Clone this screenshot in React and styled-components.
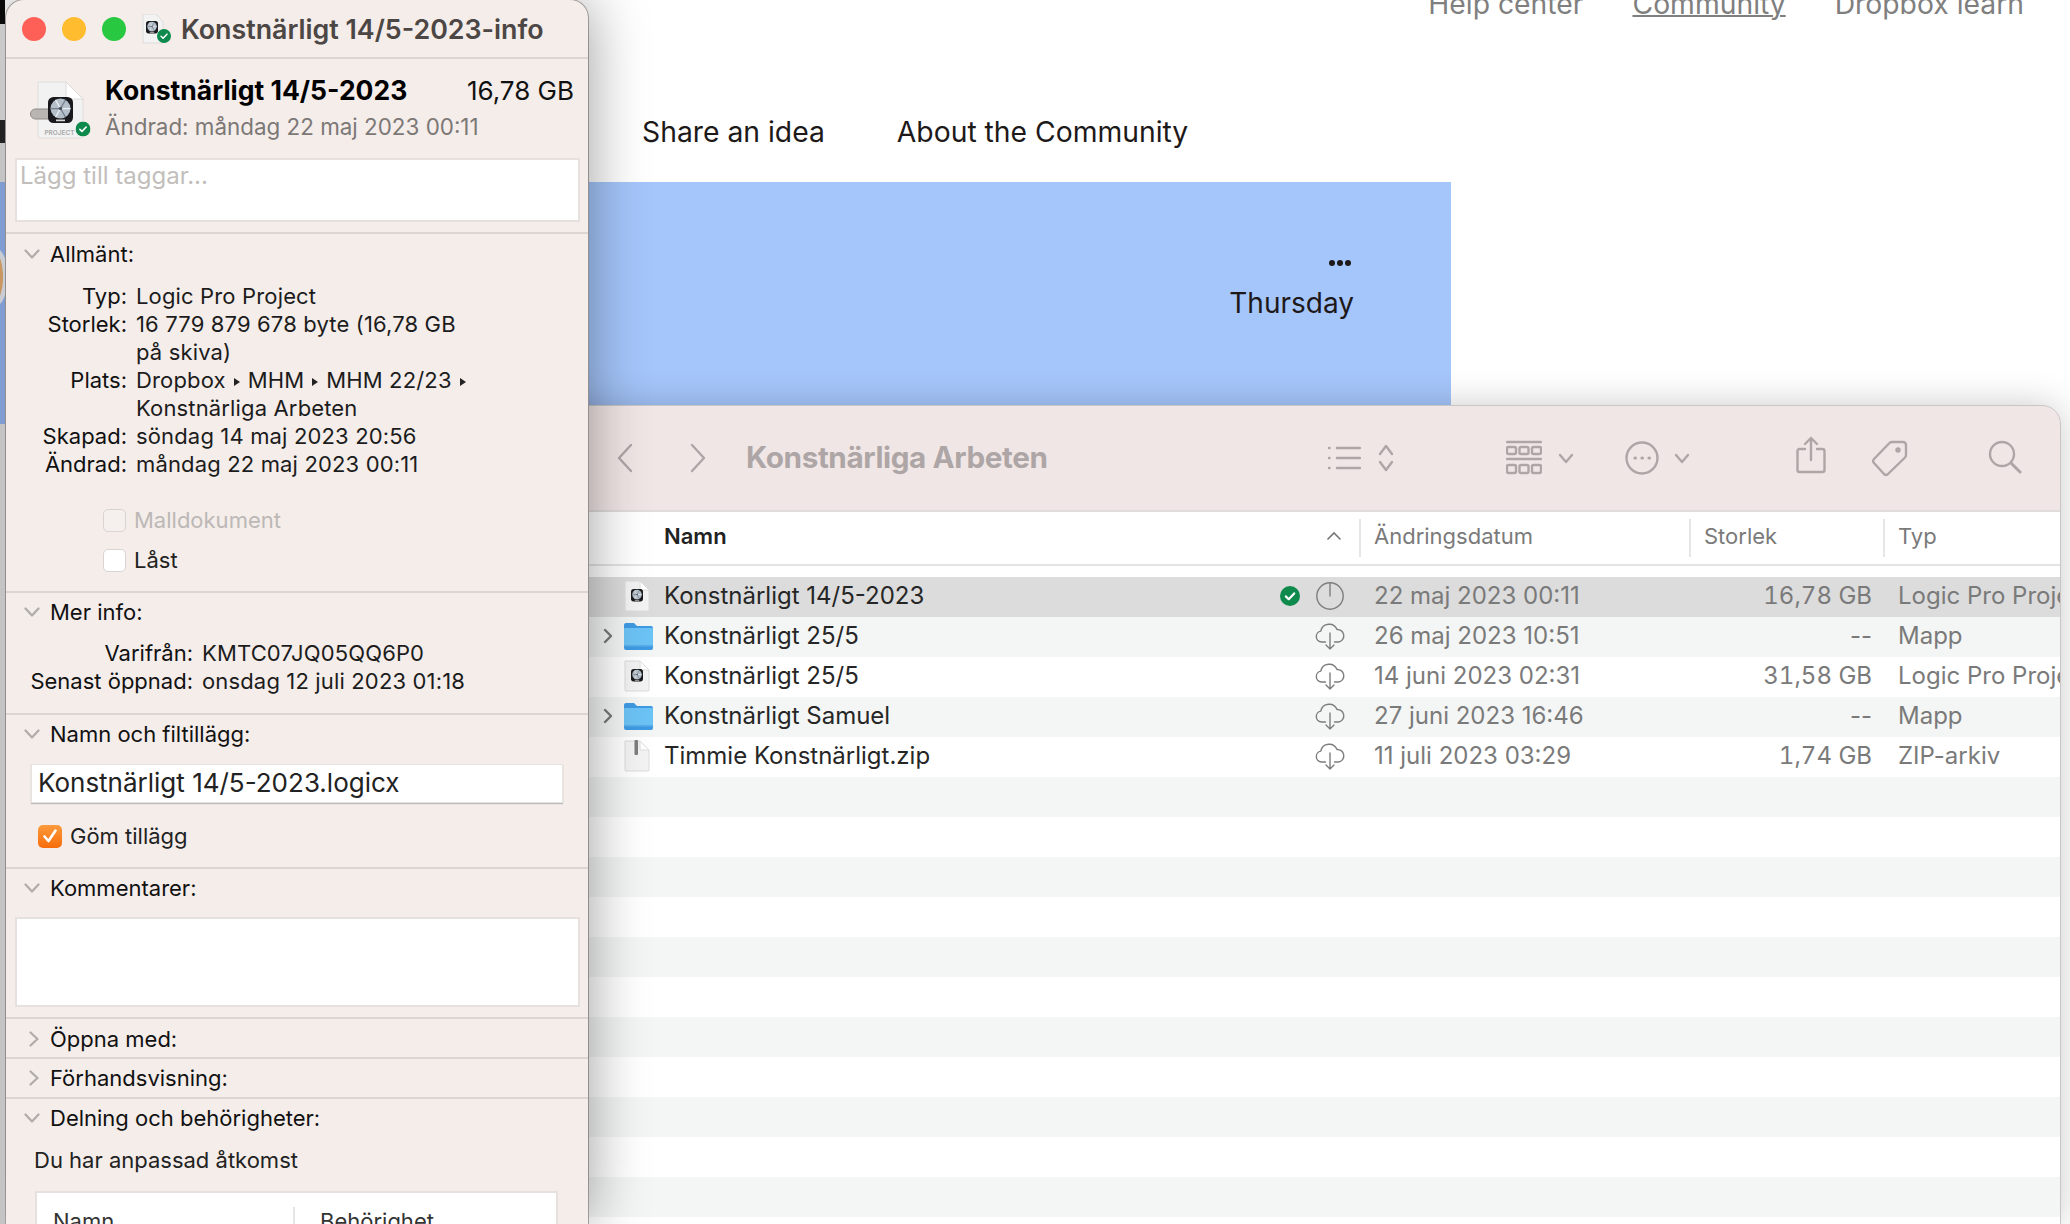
import React from "react"
import styled, { createGlobalStyle } from "styled-components"

const Global = createGlobalStyle`
  html, body { margin: 0; padding: 0; background: #fff; }
  body { font-family: Inter, "Noto Sans", sans-serif; }
`

const Desktop = styled.div`
  position: relative;
  width: 2070px;
  height: 1224px;
  overflow: hidden;
  background: #fff;
`

/* web page behind the windows */
const TopNav = styled.nav`
  height: 17px;
  display: flex;
  justify-content: flex-end;
  align-items: flex-end;
  gap: 49px;
  padding-right: 46px;
  font-size: 28.300px;
  color: #7f7f7f;
`

const NavLink = styled.span`
  line-height: 26px;
  white-space: nowrap;
  text-decoration: ${p => (p.$active ? "underline" : "none")};
  text-decoration-thickness: 2px;
`

const Tabs = styled.div`
  height: 100px;
  padding-top: 65px;
  display: flex;
  align-items: center;
  gap: 72px;
  padding-left: 642px;
  font-size: 28.300px;
  color: #1e1919;
`

const Banner = styled.div`
  width: 1451px;
  height: 224px;
  background: #a5c6fb;
  display: flex;
  flex-direction: column;
  align-items: flex-end;
  padding: 78px 97px 0 0;
  box-sizing: border-box;
  color: #1e1919;
  font-size: 28px;
`

const Dots = styled.div`
  display: flex;
  gap: 2px;
  margin: 0 3px 20px 0;
`

const Dot = styled.i`
  width: 6px;
  height: 6px;
  border-radius: 50%;
  background: #1e1919;
`

/* sliver of other windows left of the info window */
const LeftEdge = styled.div`
  position: absolute;
  left: 0;
  top: 0;
  width: 5px;
  height: 1224px;
  display: flex;
  flex-direction: column;
  overflow: hidden;
`

const EdgePiece = styled.div`
  position: relative;
  flex: none;
  height: ${p => p.$h}px;
  background: ${p => p.$bg};
`

const EdgeOval = styled.div`
  position: absolute;
  left: -20px;
  top: 65px;
  width: 18px;
  height: 50px;
  border-radius: 50%;
  border: 5px solid #c9ccd2;
  background: #c9975f;
`

/* Finder window */
const Finder = styled.section`
  position: absolute;
  left: 400px;
  top: 406px;
  width: 1660px;
  height: 818px;
  background: #fff;
  border-radius: 18px 18px 0 0;
  overflow: hidden;
  outline: 1px solid #c9c5c4;
`

const FinderShadow = styled.div`
  position: absolute;
  left: 400px;
  top: 406px;
  width: 1660px;
  height: 818px;
  border-radius: 18px 18px 0 0;
  box-shadow: 0 0 36px rgba(0, 0, 0, 0.22);
`

const Toolbar = styled.div`
  height: 104px;
  background: #f0e6e5;
  border-bottom: 2px solid #dfdcdb;
  color: #aea6a6;
  display: flex;
  align-items: center;
  padding-left: 217px;
`

const ToolIcon = styled.svg`
  flex: none;
  margin-left: ${p => p.$gap}px;
  margin-bottom: ${p => p.$up ?? 0}px;
  fill: none;
  stroke: #aea6a6;
  stroke-width: 2.4;
  stroke-linecap: round;
  stroke-linejoin: round;
`

const FolderTitle = styled.div`
  width: 540px;
  margin: 0 0 2px 40px;
  font-size: 29.700px;
  font-weight: 700;
  letter-spacing: -0.4px;
  white-space: nowrap;
`

const HeaderRow = styled.div`
  height: 52px;
  display: grid;
  grid-template-columns: 694px 330px 194px 1fr;
  align-items: center;
  padding-left: 265px;
  border-bottom: 2px solid #e4e4e4;
  font-size: 22px;
  color: #7a7a7a;
`

const HeadCell = styled.div`
  height: 38px;
  box-sizing: border-box;
  padding: 0 0 4px ${p => (p.$first ? 0 : 13)}px;
  margin-left: ${p => (p.$first ? -1 : 0)}px;
  border-left: ${p => (p.$first ? "none" : "2px solid #e6e6e6")};
  font-weight: ${p => (p.$first ? 600 : 400)};
  color: ${p => (p.$first ? "#222" : "#7a7a7a")};
  display: flex;
  align-items: center;
  justify-content: space-between;
`

const Rows = styled.div`
  padding-top: 11px;
`

const Row = styled.div`
  height: 40px;
  box-sizing: border-box;
  padding: 0 0 3px 200px;
  display: grid;
  grid-template-columns: 24px 40px 616px 35px 41px 18px 315px 183px 26px 1fr;
  align-items: center;
  font-size: 24px;
  white-space: nowrap;
  color: #7a7a7a;
  background: ${p => (p.$selected ? "#dcdcdc" : p.$odd ? "#f4f6f5" : "#fff")};
`

const NameCell = styled.div`
  color: #262626;
`

const SizeCell = styled.div`
  text-align: right;
  font-variant-numeric: ${p => (p.$numeric ? "tabular-nums" : "normal")};
`

const TypeCell = styled.div`
  overflow: hidden;
`

const IconCell = styled.div`
  display: flex;
  align-items: center;
  padding-left: ${p => p.$left ?? 0}px;
`

/* Info window */
const Info = styled.aside`
  position: absolute;
  left: 6px;
  top: 0;
  width: 582px;
  height: 1224px;
  background: #f4edea;
  border-radius: 18px 18px 0 0;
  box-shadow: 0 0 60px rgba(0, 0, 0, 0.4), 0 0 0 1px #b5b1af;
  color: #111;
  font-size: 22px;
  overflow: hidden;
`

const InfoTitleBar = styled.header`
  height: 57px;
  border-bottom: 2px solid #dcd6d3;
  display: flex;
  align-items: center;
  padding-left: 16px;
`

const Light = styled.i`
  width: 24px;
  height: 24px;
  border-radius: 50%;
  margin-right: 16px;
  background: ${p => p.$c};
`

const InfoTitle = styled.div`
  margin-left: 9px;
  font-size: 26.800px;
  font-weight: 600;
  color: #4c4644;
  white-space: nowrap;
`

const Section = styled.div`
  border-bottom: ${p => (p.$last ? "none" : "2px solid #dcd6d3")};
  padding: ${p => p.$top ?? 6}px 0 ${p => p.$bottom ?? 4}px;
`

const FileHead = styled.div`
  display: grid;
  grid-template-columns: 99px 1fr auto;
  grid-template-rows: 36px 36px;
  padding: 13px 14px 0 0;
  align-items: center;
`

const FileIconSlot = styled.div`
  grid-row: span 2;
  padding-left: 24px;
  align-self: start;
  padding-top: 3px;
`

const FileName = styled.div`
  font-size: 26.500px;
  font-weight: 700;
  color: #000;
`

const FileSize = styled.div`
  font-size: 26px;
`

const FileDate = styled.div`
  grid-column: span 2;
  font-size: 22.400px;
  color: #7c7876;
`

const TextBox = styled.div`
  margin: ${p => p.$gap}px 8px 0 9px;
  height: ${p => p.$h}px;
  background: #fff;
  border: 2px solid #e6e1de;
  box-sizing: border-box;
  padding: 1px 3px;
  font-size: 24px;
  color: #c2bebc;
`

const Disclosure = styled.div`
  height: 28px;
  display: flex;
  align-items: center;
  color: #111;
`

const ChevSlot = styled.div`
  width: 44px;
  flex: none;
  padding-left: ${p => (p.$open ? 18 : 23)}px;
  box-sizing: border-box;
  display: flex;
`

const Props = styled.div`
  margin-top: ${p => p.$gap}px;
  display: grid;
  grid-template-columns: ${p => p.$label}px 1fr;
  column-gap: 9px;
  grid-auto-rows: 28px;
  line-height: 26px;
  width: ${p => p.$width}px;
`

const PropLabel = styled.div`
  text-align: right;
  white-space: nowrap;
`

const PropValue = styled.div`
  grid-row: span ${p => p.$span ?? 1};
  line-height: 28px;
  margin-top: -1px;
  letter-spacing: 0.15px;
  color: #1c1c1c;
`

const Caret = styled.span`
  display: inline-block;
  width: 0;
  height: 0;
  margin: 0 8px 2px;
  border-left: 6px solid #222;
  border-top: 4px solid transparent;
  border-bottom: 4px solid transparent;
`

const CheckSpacer = styled.div`
  height: 21px;
`

const CheckRow = styled.label`
  height: ${p => p.$h ?? 40}px;
  margin-top: ${p => p.$gap ?? 0}px;
  display: flex;
  align-items: center;
  gap: 8px;
  padding-left: ${p => p.$left}px;
  color: ${p => (p.$disabled ? "#bcb8b6" : "#222")};
`

const CheckBox = styled.span`
  width: ${p => (p.$on ? 24 : 23)}px;
  height: 23px;
  box-sizing: border-box;
  border-radius: 5px;
  background: ${p => (p.$disabled ? "#f5f0ee" : p.$on ? "linear-gradient(#fb9a3c, #f76c0a)" : "#fff")};
  border: ${p => (p.$on ? "none" : "1px solid #d8d4d2")};
  display: flex;
  align-items: center;
  justify-content: center;
`

const NameField = styled.div`
  margin: 16px 25px 0 25px;
  height: 39px;
  background: #fff;
  box-shadow: 0 1px 1px #bbb;
  border: 1px solid #e6e2df;
  box-sizing: border-box;
  padding-left: 6px;
  font-size: 26px;
  line-height: 36px;
  color: #222;
  white-space: nowrap;
`

const AccessNote = styled.div`
  margin-top: 14px;
  height: 28px;
  line-height: 28px;
  padding-left: 28px;
  color: #222;
`

const PermTable = styled.div`
  margin: 17px 30px 0 29px;
  height: 60px;
  background: #fff;
  border: 2px solid #e6e1de;
  display: grid;
  grid-template-columns: 256px 1fr;
  padding-top: 14px;
  box-sizing: border-box;
  color: #333;
`

const PermHead = styled.div`
  height: 40px;
  line-height: 28px;
  padding-left: ${p => p.$left}px;
  border-left: ${p => (p.$line ? "2px solid #e6e6e6" : "none")};
`

function Chevron({ open }) {
  return (
    <svg width={open ? 16 : 10} height={open ? 10 : 16} viewBox={open ? "0 0 16 10" : "0 0 10 16"} fill="none" stroke="#b0acaa" strokeWidth="2.2" strokeLinecap="round" strokeLinejoin="round">
      <path d={open ? "M1.5 1.5 8 8.5 14.5 1.5" : "M1.5 1.5 8.5 8 1.5 14.5"} />
    </svg>
  )
}

function Head({ open = true, children }) {
  return (
    <Disclosure>
      <ChevSlot $open={open}>
        <Chevron open={open} />
      </ChevSlot>
      {children}
    </Disclosure>
  )
}

function GreenCheck({ size }) {
  return (
    <svg width={size} height={size} viewBox="0 0 20 20">
      <circle cx="10" cy="10" r="10" fill="#0e8a4c" />
      <path d="M5.8 10.4 8.7 13.2 14.2 7.4" fill="none" stroke="#fff" strokeWidth="2.2" strokeLinecap="round" strokeLinejoin="round" />
    </svg>
  )
}

// dark rounded square with the silver platter of the Logic icon
function Disc({ x, y, size }) {
  const cx = x + size / 2
  const cy = y + size * 0.46
  const r = size * 0.4
  const spokes = [0, 60, 120, 180, 240, 300]
  return (
    <g>
      <rect x={x} y={y} width={size} height={size * 1.04} rx={size * 0.22} fill="#1a1a1e" />
      <circle cx={cx} cy={cy} r={r} fill="#b4bfca" />
      {spokes.map(a => (
        <line
          key={a}
          x1={cx}
          y1={cy}
          x2={cx + r * Math.cos((a * Math.PI) / 180)}
          y2={cy + r * Math.sin((a * Math.PI) / 180)}
          stroke={a % 120 === 0 ? "#eef2f5" : "#75808c"}
          strokeWidth={size * 0.05}
        />
      ))}
      <circle cx={cx} cy={cy} r={size * 0.07} fill="#4d5660" />
      <rect x={cx - size * 0.18} y={y + size * 0.9} width={size * 0.36} height={size * 0.07} fill="#d8d8d8" />
    </g>
  )
}

function ProjectIcon() {
  return (
    <svg width="70" height="66" viewBox="0 0 70 66">
      <path d="M8 7H36L53 24V61a2 2 0 0 1-2 2H10a2 2 0 0 1-2-2Z" fill="#f3f2f2" stroke="#dfdddc" />
      <path d="M36 7V22a2 2 0 0 0 2 2H53Z" fill="#fff" stroke="#dddbda" />
      <rect x="0.500" y="34" width="22" height="10" rx="5" fill="#b9b5b2" stroke="#8f8b88" />
      <Disc x={18} y={22} size={25} />
      <text x="29.500" y="59.500" fontSize="6.500" fontWeight="600" textAnchor="middle" fill="#a8a8a8" fontFamily="Inter, sans-serif">PROJECT</text>
      <g transform="translate(45.500 46.500)">
        <GreenCheck size={15} />
      </g>
    </svg>
  )
}

function SmallProjectIcon() {
  return (
    <svg width="26" height="32" viewBox="0 0 26 32">
      <path d="M1 1H16L25 10V30a1 1 0 0 1-1 1H2a1 1 0 0 1-1-1Z" fill="#f3f3f3" stroke="#dcdcdc" />
      <path d="M16 1V9a1 1 0 0 0 1 1H25Z" fill="#fff" stroke="#dedede" />
      <Disc x={7} y={9} size={12} />
    </svg>
  )
}

function ZipIcon() {
  return (
    <svg width="26" height="32" viewBox="0 0 26 32">
      <path d="M1 1H16L25 10V30a1 1 0 0 1-1 1H2a1 1 0 0 1-1-1Z" fill="#f3f3f3" stroke="#dcdcdc" />
      <path d="M16 1V9a1 1 0 0 0 1 1H25Z" fill="#fff" stroke="#dedede" />
      <rect x="10.500" y="0" width="3.500" height="15" rx="1" fill="#7d7d7d" />
    </svg>
  )
}

function FolderIcon() {
  return (
    <svg width="29" height="28" viewBox="0 0 29 28">
      <path d="M0 3a2 2 0 0 1 2-2h8l3 3h14a2 2 0 0 1 2 2v20a2 2 0 0 1-2 2H2a2 2 0 0 1-2-2Z" fill="#3e9be3" />
      <path d="M0 7a1 1 0 0 1 1-1h27a1 1 0 0 1 1 1v16H0Z" fill="#6cc3f5" />
      <path d="M0 23h29v1.500H0Z" fill="#58aeea" />
    </svg>
  )
}

function CloudIcon() {
  return (
    <svg width="30" height="28" viewBox="0 0 30 28" fill="none" stroke="#7e7e7e" strokeWidth="1.4" strokeLinecap="round" strokeLinejoin="round">
      <path d="M10.500 20H6.500a5.500 5.500 0 0 1-.7-10.900A8.500 8.500 0 0 1 22 7.500 6.300 6.300 0 0 1 23.500 20H19.500" />
      <path d="M15 11V27M11 23l4 4 4-4" />
    </svg>
  )
}

function PieIcon() {
  return (
    <svg width="30" height="28" viewBox="0 0 30 28" fill="none" stroke="#7e7e7e" strokeWidth="1.4" strokeLinecap="round">
      <circle cx="15" cy="14" r="13.200" />
      <path d="M15 1v13" />
    </svg>
  )
}

const finderRows = [
  { name: "Konstnärligt 14/5-2023", date: "22 maj 2023 00:11", size: "16,78 GB", type: "Logic Pro Project", icon: "project", synced: true },
  { name: "Konstnärligt 25/5", date: "26 maj 2023 10:51", size: "--", type: "Mapp", icon: "folder" },
  { name: "Konstnärligt 25/5", date: "14 juni 2023 02:31", size: "31,58 GB", type: "Logic Pro Project", icon: "project" },
  { name: "Konstnärligt Samuel", date: "27 juni 2023 16:46", size: "--", type: "Mapp", icon: "folder" },
  { name: "Timmie Konstnärligt.zip", date: "11 juli 2023 03:29", size: "1,74 GB", type: "ZIP-arkiv", icon: "zip" },
]

const emptyRows = Array.from({ length: 12 }, (_, i) => i)

function FinderRow({ row, index }) {
  const folder = row.icon === "folder"
  return (
    <Row $selected={row.synced} $odd={index % 2 === 1}>
      <IconCell $left={2}>
        {folder ? (
          <svg width="12" height="16" viewBox="0 0 12 16" fill="none" stroke="#777" strokeWidth="2.4" strokeLinecap="round" strokeLinejoin="round">
            <path d="M3 2 9 8 3 14" />
          </svg>
        ) : null}
      </IconCell>
      <IconCell>
        {folder ? <FolderIcon /> : row.icon === "zip" ? <ZipIcon /> : <SmallProjectIcon />}
      </IconCell>
      <NameCell>{row.name}</NameCell>
      <IconCell>{row.synced ? <GreenCheck size={20} /> : null}</IconCell>
      <IconCell>{row.synced ? <PieIcon /> : <CloudIcon />}</IconCell>
      <div />
      <div>{row.date}</div>
      <SizeCell $numeric={!folder}>{row.size}</SizeCell>
      <div />
      <TypeCell>{row.type}</TypeCell>
    </Row>
  )
}

export default function App() {
  return (
    <Desktop>
      <Global />
      <TopNav>
        <NavLink>Help center</NavLink>
        <NavLink $active>Community</NavLink>
        <NavLink>Dropbox learn</NavLink>
      </TopNav>
      <Tabs>
        <span>Share an idea</span>
        <span>About the Community</span>
      </Tabs>
      <Banner>
        <Dots>
          <Dot />
          <Dot />
          <Dot />
        </Dots>
        <div>Thursday</div>
      </Banner>

      <FinderShadow />
      <Finder>
        <Toolbar>
          <ToolIcon $gap={0} width="16" height="30" viewBox="0 0 16 30">
            <path d="M14 2 2 15l12 13" />
          </ToolIcon>
          <ToolIcon $gap={57} width="16" height="30" viewBox="0 0 16 30">
            <path d="M2 2l12 13L2 28" />
          </ToolIcon>
          <FolderTitle>Konstnärliga Arbeten</FolderTitle>
          <ToolIcon $gap={41} width="34" height="26" viewBox="0 0 34 26">
            <path d="M10 3h23M10 13h23M10 23h23M2 3h.5M2 13h.5M2 23h.5" />
          </ToolIcon>
          <ToolIcon $gap={17} width="16" height="28" viewBox="0 0 16 28">
            <path d="M2 10l6-8 6 8M2 18l6 8 6-8" />
          </ToolIcon>
          <ToolIcon $gap={112} width="36" height="36" viewBox="0 0 36 36">
            <path d="M1 2h34M1 19h34" />
            <rect x="1" y="7" width="9" height="7" rx="1.500" />
            <rect x="13.500" y="7" width="9" height="7" rx="1.500" />
            <rect x="26" y="7" width="9" height="7" rx="1.500" />
            <rect x="1" y="25" width="9" height="8" rx="1.500" />
            <rect x="13.500" y="25" width="9" height="8" rx="1.500" />
            <rect x="26" y="25" width="9" height="8" rx="1.500" />
          </ToolIcon>
          <ToolIcon $gap={16} width="16" height="11" viewBox="0 0 16 11">
            <path d="M2 2l6 7 6-7" />
          </ToolIcon>
          <ToolIcon $gap={51} width="34" height="34" viewBox="0 0 34 34">
            <circle cx="17" cy="17" r="15.500" />
            <path d="M10 17h.4M17 17h.4M24 17h.4" strokeWidth="3.200" />
          </ToolIcon>
          <ToolIcon $gap={15} width="16" height="11" viewBox="0 0 16 11">
            <path d="M2 2l6 7 6-7" />
          </ToolIcon>
          <ToolIcon $gap={106} $up={6} width="30" height="38" viewBox="0 0 30 38">
            <path d="M9 13H3.500a2 2 0 0 0-2 2V34a2 2 0 0 0 2 2H26.500a2 2 0 0 0 2-2V15a2 2 0 0 0-2-2H21" />
            <path d="M15 24V2M9 8l6-6 6 6" />
          </ToolIcon>
          <ToolIcon $gap={45} width="38" height="38" viewBox="0 0 38 38">
            <path d="M21 3h11a3 3 0 0 1 3 3v10a4 4 0 0 1-1 2.500L17 35a3 3 0 0 1-4 0L3 24a3 3 0 0 1 0-4L18 4.500A4 4 0 0 1 21 3Z" />
            <circle cx="27" cy="11" r="1.500" />
          </ToolIcon>
          <ToolIcon $gap={79} $up={3} width="34" height="34" viewBox="0 0 34 34">
            <circle cx="14" cy="14" r="12" />
            <path d="M23 23l9 9" strokeWidth="3" />
          </ToolIcon>
        </Toolbar>
        <HeaderRow>
          <HeadCell $first>
            Namn
            <svg width="16" height="10" viewBox="0 0 16 10" fill="none" stroke="#777" strokeWidth="1.600" style={{ marginRight: 17 }}>
              <path d="M1.500 8.500 8 2l6.500 6.500" />
            </svg>
          </HeadCell>
          <HeadCell>Ändringsdatum</HeadCell>
          <HeadCell>Storlek</HeadCell>
          <HeadCell>Typ</HeadCell>
        </HeaderRow>
        <Rows>
          {finderRows.map((row, i) => (
            <FinderRow key={row.date} row={row} index={i} />
          ))}
          {emptyRows.map(i => (
            <Row key={i} $odd={i % 2 === 0} />
          ))}
        </Rows>
      </Finder>

      <Info>
        <InfoTitleBar>
          <Light $c="#fe5f57" />
          <Light $c="#febc2e" />
          <Light $c="#28c840" />
          <svg width="30" height="30" viewBox="0 0 30 30">
            <path d="M1 0H14L21 8V29H1Z" fill="#f3f3f3" stroke="#dcdcdc" />
            <Disc x={4} y={7} size={12} />
            <g transform="translate(15 15)">
              <GreenCheck size={14} />
            </g>
          </svg>
          <InfoTitle>Konstnärligt 14/5-2023-info</InfoTitle>
        </InfoTitleBar>

        <Section $top={0} $bottom={10}>
          <FileHead>
            <FileIconSlot>
              <ProjectIcon />
            </FileIconSlot>
            <FileName>Konstnärligt 14/5-2023</FileName>
            <FileSize>16,78 GB</FileSize>
            <FileDate>Ändrad: måndag 22 maj 2023 00:11</FileDate>
          </FileHead>
          <TextBox $gap={14} $h={64}>Lägg till taggar...</TextBox>
        </Section>

        <Section $bottom={11}>
          <Head>Allmänt:</Head>
          <Props $gap={15} $label={121} $width={470}>
            <PropLabel>Typ:</PropLabel>
            <PropValue>Logic Pro Project</PropValue>
            <PropLabel>Storlek:</PropLabel>
            <PropValue $span={2}>16 779 879 678 byte (16,78 GB på skiva)</PropValue>
            <div />
            <PropLabel>Plats:</PropLabel>
            <PropValue $span={2}>
              Dropbox<Caret />MHM<Caret />MHM 22/23<Caret />
              Konstnärliga Arbeten
            </PropValue>
            <div />
            <PropLabel>Skapad:</PropLabel>
            <PropValue>söndag 14 maj 2023 20:56</PropValue>
            <PropLabel>Ändrad:</PropLabel>
            <PropValue>måndag 22 maj 2023 00:11</PropValue>
          </Props>
          <CheckSpacer />
          <CheckRow $left={97} $disabled>
            <CheckBox $disabled />
            Malldokument
          </CheckRow>
          <CheckRow $left={97}>
            <CheckBox />
            Låst
          </CheckRow>
        </Section>

        <Section $top={5} $bottom={17}>
          <Head>Mer info:</Head>
          <Props $gap={14} $label={187}>
            <PropLabel>Varifrån:</PropLabel>
            <PropValue>KMTC07JQ05QQ6P0</PropValue>
            <PropLabel>Senast öppnad:</PropLabel>
            <PropValue>onsdag 12 juli 2023 01:18</PropValue>
          </Props>
        </Section>

        <Section $top={5} $bottom={17}>
          <Head>Namn och filtillägg:</Head>
          <NameField>Konstnärligt 14/5-2023.logicx</NameField>
          <CheckRow $left={32} $h={28} $gap={19}>
            <CheckBox $on>
              <svg width="16" height="16" viewBox="0 0 16 16" fill="none" stroke="#fff" strokeWidth="2.600" strokeLinecap="round" strokeLinejoin="round">
                <path d="M2.500 8.500 6.500 13 13.500 2.500" />
              </svg>
            </CheckBox>
            Göm tillägg
          </CheckRow>
        </Section>

        <Section $top={5} $bottom={10}>
          <Head>Kommentarer:</Head>
          <TextBox $gap={15} $h={90} />
        </Section>

        <Section $bottom={4}>
          <Head open={false}>Öppna med:</Head>
        </Section>
        <Section $top={5} $bottom={5}>
          <Head open={false}>Förhandsvisning:</Head>
        </Section>
        <Section $top={5} $bottom={0} $last>
          <Head>Delning och behörigheter:</Head>
          <AccessNote>Du har anpassad åtkomst</AccessNote>
          <PermTable>
            <PermHead $left={16}>Namn</PermHead>
            <PermHead $left={25} $line>Behörighet</PermHead>
          </PermTable>
        </Section>
      </Info>

      <LeftEdge>
        <EdgePiece $h={24} $bg="#0a0a0a" />
        <EdgePiece $h={96} $bg="#c9c9c9" />
        <EdgePiece $h={23} $bg="#222" />
        <EdgePiece $h={39} $bg="#c4c4c4" />
        <EdgePiece $h={242} $bg="#7f9dd2">
          <EdgeOval />
        </EdgePiece>
        <EdgePiece $h={800} $bg="#c4c4c4" />
      </LeftEdge>
    </Desktop>
  )
}
